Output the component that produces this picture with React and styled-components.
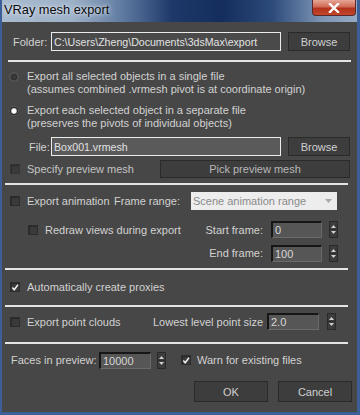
import React from "react";
import styled, { createGlobalStyle } from "styled-components";

const Global = createGlobalStyle`
  html, body { margin: 0; padding: 0; background: #1e3a68; }
  body { font-family: "Liberation Sans", Arial, sans-serif; }
`;

const Window = styled.div`
  width: 360px;
  height: 415px;
  box-sizing: border-box;
  display: flex;
  flex-direction: column;
  background: linear-gradient(90deg, #a9bbcf 0%, #9cb0c7 20%, #5f7aa0 34%, #1d3869 48%, #142d5c 62%, #2c4a7a 76%, #7d95b5 90%, #95aac3 100%);
  border-left: 2px solid #3b5f96;
  border-right: 3px solid #3b5f96;
  border-bottom: 3px solid #3b5f96;
  overflow: hidden;
`;

const TitleBar = styled.div`
  height: 22px;
  flex: none;
  display: flex;
  align-items: flex-start;
  justify-content: space-between;
  padding-left: 2px;
`;

const Title = styled.span`
  font-family: "Liberation Sans", Arial, sans-serif;
  font-size: 12.8px;
  color: #0a0a0a;
  line-height: 17px;
  margin-top: 1px;
  text-shadow: 0 0 6px rgba(230, 238, 248, 0.9), 0 0 3px rgba(230, 238, 248, 0.9);
`;

const CloseButton = styled.div`
  width: 44px;
  height: 16px;
  margin-right: 1px;
  border: 1px solid #5a2a2a;
  border-top: none;
  border-radius: 0 0 4px 4px;
  background: linear-gradient(180deg, #e6a696 0%, #d06a55 45%, #b3331d 55%, #c4462c 100%);
  display: flex;
  align-items: center;
  justify-content: center;
  box-sizing: border-box;
`;

const Body = styled.div`
  flex: 1;
  background: #474747;
  display: flex;
  flex-direction: column;
  color: #d2d2d2;
  font-size: 11px;
`;

const Row = styled.div`
  display: flex;
  align-items: center;
  height: ${(p) => p.$h}px;
  margin-top: ${(p) => p.$mt}px;
  padding-left: ${(p) => p.$pl || 0}px;
  flex: none;
`;

const Separator = styled.div`
  height: 2px;
  background: #e4e4e4;
  margin-top: ${(p) => p.$mt}px;
  margin-left: ${(p) => p.$l}px;
  width: ${(p) => p.$w}px;
  flex: none;
`;

const Label = styled.span`
  color: ${(p) => (p.$dim ? "#c4c4c4" : "#d2d2d2")};
  white-space: nowrap;
  flex: none;
  width: ${(p) => (p.$w ? p.$w + "px" : "auto")};
  text-align: ${(p) => p.$align || "left"};
  margin-left: ${(p) => p.$ml || 0}px;
`;

const PathInput = styled.div`
  width: 230px;
  height: 19px;
  box-sizing: border-box;
  border: 1.5px solid #ececec;
  background: ${(p) => (p.$light ? "#5a5a5a" : "#4a4a4a")};
  color: #e2e2e2;
  font-size: 10.6px;
  display: flex;
  align-items: center;
  padding-left: 2px;
  white-space: nowrap;
  overflow: hidden;
  flex: none;
`;

const Button = styled.div`
  width: ${(p) => p.$w}px;
  height: ${(p) => p.$h || 19}px;
  margin-left: ${(p) => p.$ml || 0}px;
  box-sizing: border-box;
  background: #3d3d3d;
  border: 1px solid #2a2a2a;
  color: ${(p) => (p.$dim ? "#b8b8b8" : "#d0d0d0")};
  display: flex;
  align-items: center;
  justify-content: center;
  font-size: 11px;
  flex: none;
`;

const RadioBlock = styled.div`
  display: flex;
  align-items: flex-start;
  margin-top: ${(p) => p.$mt}px;
  padding-left: 8px;
  flex: none;
`;

const Radio = styled.div`
  width: 8px;
  height: 8px;
  border-radius: 50%;
  margin-top: 3px;
  box-sizing: border-box;
  background: ${(p) =>
    p.$on
      ? "radial-gradient(circle, #ffffff 0 2px, #bcbcbc 2.5px, #2a2a2a 3.5px)"
      : "radial-gradient(circle, #3a3a3a 0 2px, #2e2e2e 3px, #5a5a5a 4px)"};
  box-shadow: 0 0 0 0.5px #6a6a6a;
`;

const RadioText = styled.div`
  margin-left: 9px;
  line-height: 13px;
`;

const Check = styled.div`
  width: 10px;
  height: 10px;
  box-sizing: border-box;
  background: #3a3a3a;
  border: 1px solid ${(p) => (p.$dim ? "#353535" : "#2c2c2c")};
  box-shadow: inset 1px 1px 0 #2a2a2a;
  margin-left: ${(p) => p.$ml || 0}px;
  margin-right: ${(p) => p.$mr || 7}px;
  display: flex;
  align-items: center;
  justify-content: center;
  flex: none;
`;

const Dropdown = styled.div`
  width: 146px;
  height: 18px;
  background: #ededed;
  color: #8a8a8a;
  box-sizing: border-box;
  display: flex;
  align-items: center;
  justify-content: space-between;
  padding: 0 5px 0 2px;
  font-size: 11px;
  flex: none;
`;

const SpinInput = styled.div`
  width: ${(p) => p.$w}px;
  height: 17px;
  margin-left: ${(p) => p.$ml || 0}px;
  box-sizing: border-box;
  background: #565656;
  border-top: 2px solid #161616;
  border-left: 2px solid #161616;
  border-bottom: 1px solid #6a6a6a;
  border-right: 1px solid #6a6a6a;
  color: #d6d6d6;
  display: flex;
  align-items: center;
  padding-left: 2px;
  font-size: 11px;
  flex: none;
`;

const SpinArrows = styled.div`
  width: 9px;
  height: 17px;
  margin-left: ${(p) => p.$ml}px;
  box-sizing: border-box;
  background: #3c3c3c;
  border: 1px solid #2a2a2a;
  display: flex;
  align-items: center;
  justify-content: center;
  flex: none;
`;

const ButtonRow = styled.div`
  display: flex;
  justify-content: flex-end;
  gap: 10px;
  margin-top: 13px;
  padding-right: 5px;
  flex: none;
`;

const CheckMark = () => (
  <svg width="9" height="9" viewBox="0 0 9 9">
    <path d="M1.5 4.5 L3.6 7 L7.8 1.5" fill="none" stroke="#f2f2f2" strokeWidth="1.7" />
  </svg>
);

const Spin = ({ ml }) => (
  <SpinArrows $ml={ml}>
    <svg width="7" height="13" viewBox="0 0 7 13">
      <path d="M3.5 2 L6 5 L1 5 Z" fill="#cfcfcf" />
      <path d="M1 8 L6 8 L3.5 11 Z" fill="#cfcfcf" />
      <line x1="0" y1="6.5" x2="7" y2="6.5" stroke="#2a2a2a" strokeWidth="0.8" />
    </svg>
  </SpinArrows>
);

export default function App() {
  return (
    <>
      <Global />
      <Window>
        <TitleBar>
          <Title>VRay mesh export</Title>
          <CloseButton>
            <svg width="12" height="10" viewBox="0 0 12 10">
              <path d="M2 1 L10 9 M10 1 L2 9" stroke="#ffffff" strokeWidth="2.4" strokeLinecap="square" />
            </svg>
          </CloseButton>
        </TitleBar>
        <Body>
          <Row $h={19} $mt={10} $pl={11}>
            <Label $w={38}>Folder:</Label>
            <PathInput>C:\Users\Zheng\Documents\3dsMax\export</PathInput>
            <Button $w={62} $ml={7}>Browse</Button>
          </Row>
          <Separator $mt={9} $l={6} $w={343} />

          <RadioBlock $mt={8}>
            <Radio />
            <RadioText>
              Export all selected objects in a single file
              <br />
              (assumes combined .vrmesh pivot is at coordinate origin)
            </RadioText>
          </RadioBlock>
          <RadioBlock $mt={8}>
            <Radio $on />
            <RadioText>
              Export each selected object in a separate file
              <br />
              (preserves the pivots of individual objects)
            </RadioText>
          </RadioBlock>

          <Row $h={19} $mt={7} $pl={27}>
            <Label $w={22}>File:</Label>
            <PathInput $light>Box001.vrmesh</PathInput>
            <Button $w={62} $ml={7}>Browse</Button>
          </Row>

          <Row $h={18} $mt={4} $pl={8}>
            <Check $dim />
            <Label $dim $w={133}>Specify preview mesh</Label>
            <Button $w={190} $h={18} $dim>Pick preview mesh</Button>
          </Row>
          <Separator $mt={5} $l={3} $w={343} />

          <Row $h={18} $mt={7} $pl={8}>
            <Check />
            <Label $w={87}>Export animation</Label>
            <Label $w={77}>Frame range:</Label>
            <Dropdown>
              Scene animation range
              <svg width="7" height="5" viewBox="0 0 7 5">
                <path d="M0 0 L7 0 L3.5 4 Z" fill="#a8a8a8" />
              </svg>
            </Dropdown>
          </Row>

          <Row $h={17} $mt={11} $pl={26}>
            <Check $mr={7} />
            <Label $w={150}>Redraw views during export</Label>
            <Label $w={68} $align="right">Start frame:</Label>
            <SpinInput $w={51} $ml={8}>0</SpinInput>
            <Spin ml={7} />
          </Row>
          <Row $h={18} $mt={6} $pl={26}>
            <Label $w={235} $align="right">End frame:</Label>
            <SpinInput $w={51} $ml={8}>100</SpinInput>
            <Spin ml={7} />
          </Row>
          <Separator $mt={6} $l={3} $w={343} />

          <Row $h={14} $mt={10} $pl={8}>
            <Check>
              <CheckMark />
            </Check>
            <Label>Automatically create proxies</Label>
          </Row>
          <Separator $mt={11} $l={3} $w={343} />

          <Row $h={17} $mt={6} $pl={8}>
            <Check />
            <Label $w={126}>Export point clouds</Label>
            <Label $w={114}>Lowest level point size</Label>
            <SpinInput $w={52}>2.0</SpinInput>
            <Spin ml={8} />
          </Row>
          <Separator $mt={12} $l={3} $w={343} />

          <Row $h={16} $mt={8} $pl={9}>
            <Label $w={88}>Faces in preview:</Label>
            <SpinInput $w={52}>10000</SpinInput>
            <Spin ml={6} />
            <Check $ml={15} $mr={6}>
              <CheckMark />
            </Check>
            <Label>Warn for existing files</Label>
          </Row>

          <ButtonRow>
            <Button $w={74} $h={21}>OK</Button>
            <Button $w={74} $h={21}>Cancel</Button>
          </ButtonRow>
        </Body>
      </Window>
    </>
  );
}
